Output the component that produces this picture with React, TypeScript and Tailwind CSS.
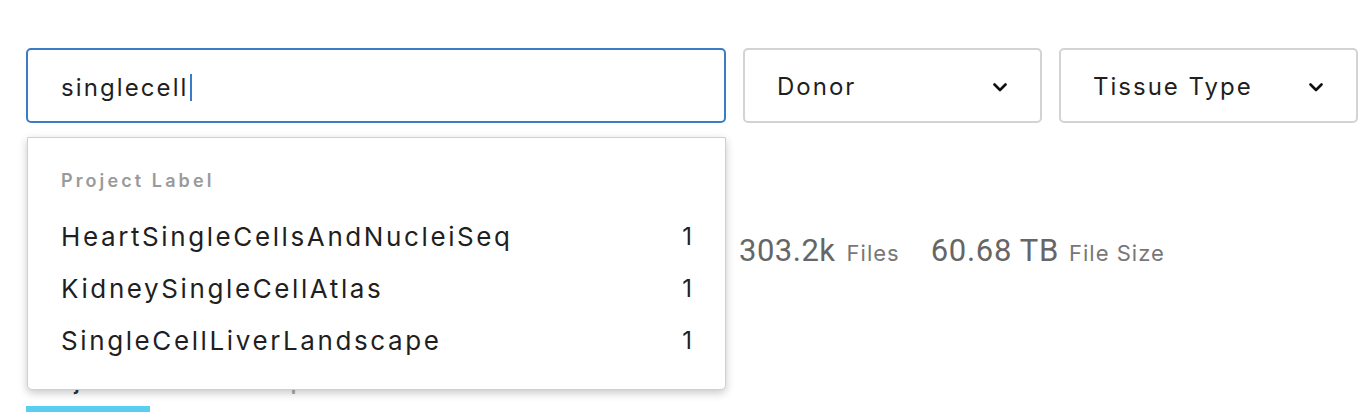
import React from "react";

const Chevron = () => (
  <svg width="14" height="9" viewBox="0 0 14 9" fill="none">
    <polyline points="1.5,1.5 7,7 12.5,1.5" stroke="#111" strokeWidth="2.6" strokeLinecap="round" strokeLinejoin="round" />
  </svg>
);

const items = [
  "HeartSingleCellsAndNucleiSeq",
  "KidneySingleCellAtlas",
  "SingleCellLiverLandscape",
];

export default function App() {
  return (
    <div className="relative w-[1362px] h-[412px] overflow-hidden bg-white font-['Inter',sans-serif] text-[#1f1f1f]">
      <div className="pl-[26px] pt-[48px]">
        <div className="flex gap-[17px]">
          <div className="relative w-[700px]">
            <div className="h-[75px] border-2 border-[#3b7cc6] rounded-[5px] flex items-center pl-[33px] pt-[4px] text-[24px] tracking-[2.1px]">
              <span>singlecell</span>
              <span className="ml-[1px] inline-block w-[2px] h-[27px] bg-[#3b7cc6]" />
            </div>
            <div className="absolute z-10 left-[1px] top-[89px] w-[699px] h-[253px] bg-white border border-[#d0d0d0] rounded-b-[5px] shadow-[0_3px_8px_rgba(0,0,0,0.22)] px-[33px] pt-[32px]">
              <div className="text-[18px] font-semibold tracking-[3.1px] text-[#9a9a9a] leading-[22px]">Project Label</div>
              <div className="mt-[29px] flex flex-col gap-[20px]">
                {items.map((t) => (
                  <div key={t} className="flex justify-between items-center h-[32px] text-[26px] tracking-[2.6px] leading-[32px]">
                    <span>{t}</span>
                    <span className="tracking-normal text-[24px]">1</span>
                  </div>
                ))}
              </div>
            </div>
          </div>
          {["Donor", "Tissue Type"].map((l) => (
            <div key={l} className="w-[299px] h-[75px] border-2 border-[#d3d3d3] rounded-[5px] flex items-center justify-between pl-[32px] pr-[33px] pt-[3px] text-[24px] tracking-[2px]">
              <span>{l}</span>
              <Chevron />
            </div>
          ))}
        </div>

        <div className="mt-[105px] flex items-baseline h-[36px]">
          <div className="w-[713px]" />
          <span className="font-['Roboto',sans-serif] text-[31px] text-[#666] tracking-[0.5px]">303.2k</span>
          <span className="ml-[11px] text-[22px] text-[#777] tracking-[1px]">Files</span>
          <span className="ml-[31px] font-['Roboto',sans-serif] text-[31px] text-[#666] tracking-[0.7px]">60.68 TB</span>
          <span className="ml-[10px] text-[22px] text-[#777] tracking-[1px]">File Size</span>
        </div>

        <div className="mt-[106px] flex">
          <div className="w-[124px] flex flex-col">
            <div className="pl-[14px] text-[21px] font-semibold text-[#333] leading-[26px]">Projects</div>
            <div className="mt-[10px] h-[6px] bg-[#5bcdf0]" />
          </div>
          <div className="ml-[96px] text-[21px] font-semibold text-[#aaa] leading-[26px]">Samples</div>
        </div>
      </div>
    </div>
  );
}
